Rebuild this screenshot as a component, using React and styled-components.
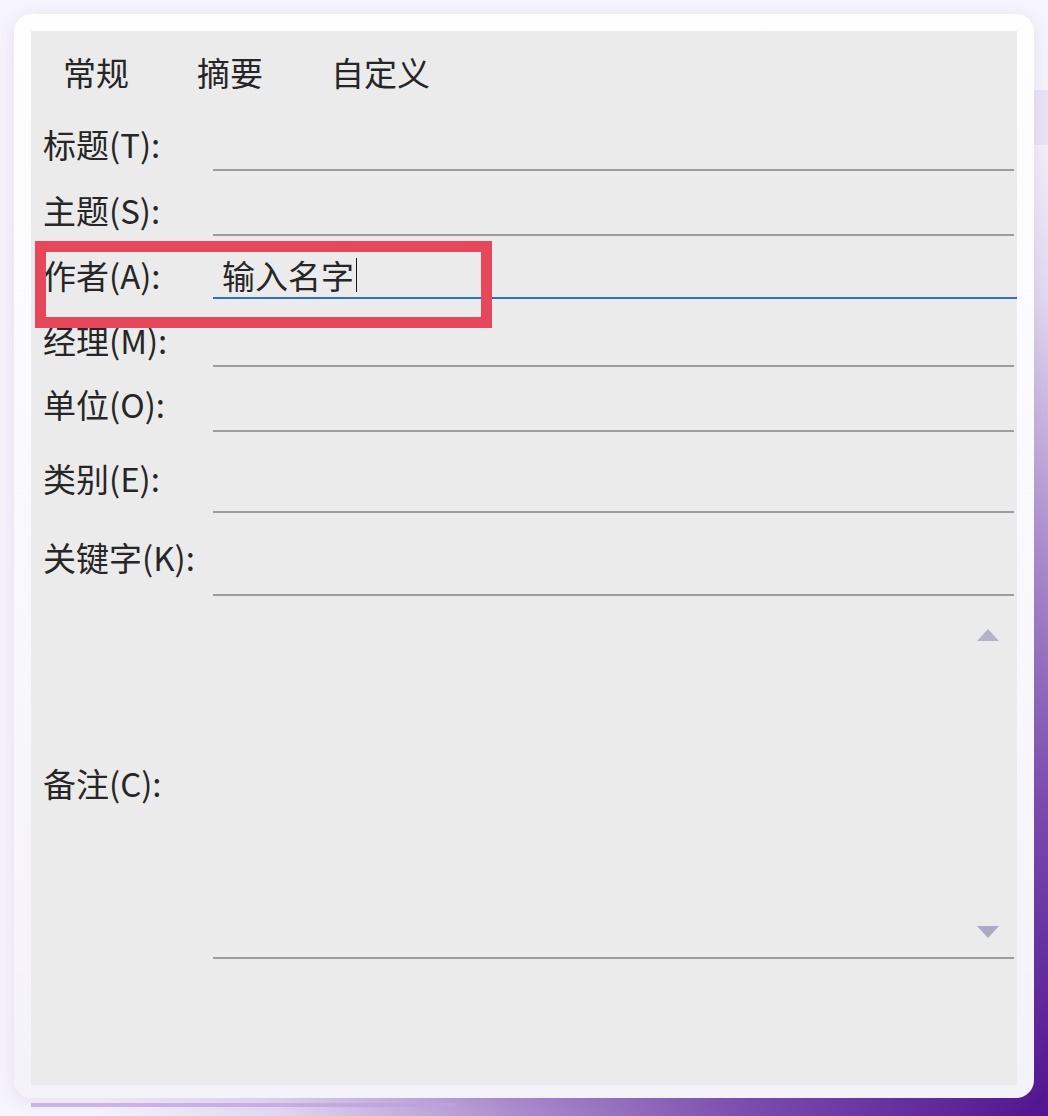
import React from "react";
import styled, { createGlobalStyle } from "styled-components";

const Global = createGlobalStyle`
  html, body {
    margin: 0;
    padding: 0;
  }
  body {
    width: 1048px;
    min-height: 1116px;
    overflow: hidden;
    font-family: "Noto Sans CJK SC", "Noto Sans", sans-serif;
    background:
      linear-gradient(#ebe3f5, #ebe3f5) right 90px / 20px 55px no-repeat,
      radial-gradient(ellipse at 100% 100%, #521490 0%, #7c4cb0 20%, #ad8ecf 36%, #e4d9f1 52%, #f6f4fc 64%, #f6f4fc 100%);
  }
`;

const Page = styled.div`
  width: 1048px;
  height: 1116px;
  padding: 14px 0 0 14px;
  box-sizing: border-box;
`;

const Card = styled.div`
  width: 1020px;
  height: 1084px;
  box-sizing: border-box;
  padding: 17px 17px 13px 17px;
  border-radius: 18px;
  background: linear-gradient(to bottom, #fefefe, #f4f2f9);
  box-shadow: 0 4px 18px rgba(90, 70, 140, 0.12);
`;

const UnderBar = styled.div`
  margin: 5px 0 0 17px;
  width: 424px;
  height: 4px;
  background: rgba(190, 160, 226, 0.75);
`;

const Panel = styled.div`
  position: relative;
  height: 100%;
  box-sizing: border-box;
  background: #ebebeb;
  padding: 0 3px 0 12px;
  color: #262626;
`;

const TabBar = styled.div`
  display: flex;
  align-items: center;
  gap: 68px;
  height: 75px;
  box-sizing: border-box;
  padding: 7px 0 0 20px;
`;

const Tab = styled.div`
  font-size: 33px;
  line-height: 40px;
  white-space: nowrap;
`;

const Row = styled.div`
  display: grid;
  grid-template-columns: 170px 1fr;
  align-items: end;
  height: ${(p) => p.$h}px;
`;

const Label = styled.div`
  font-size: 33px;
  line-height: 40px;
  white-space: nowrap;
  margin-bottom: ${(p) => p.$lift}px;
  align-self: ${(p) => (p.$center ? "center" : "end")};
  margin-top: ${(p) => (p.$center ? 10 : 0)}px;
`;

const Field = styled.div`
  height: 100%;
  box-sizing: border-box;
  display: flex;
  align-items: flex-end;
  border-bottom: 2px solid ${(p) => (p.$active ? "#2e6ec4" : "#9d9d9d")};
  margin-right: ${(p) => (p.$active ? -3 : 0)}px;
  padding: 0 0 2px 9px;
`;

const Value = styled.span`
  font-size: 33px;
  line-height: 40px;
  white-space: nowrap;
  display: inline-flex;
  align-items: center;
`;

const Caret = styled.span`
  display: inline-block;
  width: 1px;
  height: 34px;
  margin-left: 2px;
  background: #1a1a1a;
`;

const NotesField = styled.div`
  height: 100%;
  box-sizing: border-box;
  display: flex;
  justify-content: flex-end;
  border-bottom: 2px solid #9d9d9d;
`;

const ScrollTrack = styled.div`
  display: flex;
  flex-direction: column;
  justify-content: space-between;
  align-items: center;
  width: 24px;
  margin-right: 14px;
  padding: 33px 0 19px;
`;

const Arrow = styled.div`
  width: 0;
  height: 0;
  border-left: 11px solid transparent;
  border-right: 11px solid transparent;
  ${(p) =>
    p.$down
      ? "border-top: 12px solid #aaaac6;"
      : "border-bottom: 12px solid #b2b2c8;"}
`;

const Highlight = styled.div`
  position: absolute;
  left: 4px;
  top: 210px;
  width: 457px;
  height: 87px;
  box-sizing: border-box;
  border: 11px solid #e6475a;
  pointer-events: none;
`;

const rows = [
  { label: "标题(T):", h: 65, lift: 7 },
  { label: "主题(S):", h: 65, lift: 6 },
  { label: "作者(A):", h: 63, lift: 4, value: "输入名字", active: true },
  { label: "经理(M):", h: 68, lift: 7 },
  { label: "单位(O):", h: 65, lift: 8 },
  { label: "类别(E):", h: 81, lift: 15 },
  { label: "关键字(K):", h: 83, lift: 19 },
];

export default function App() {
  return (
    <>
      <Global />
      <Page>
        <Card>
          <Panel>
            <TabBar>
              <Tab>常规</Tab>
              <Tab>摘要</Tab>
              <Tab>自定义</Tab>
            </TabBar>
            {rows.map((r) => (
              <Row key={r.label} $h={r.h}>
                <Label $lift={r.lift}>{r.label}</Label>
                <Field $active={r.active}>
                  {r.value && (
                    <Value>
                      {r.value}
                      <Caret />
                    </Value>
                  )}
                </Field>
              </Row>
            ))}
            <Row $h={363}>
              <Label $center $lift={0}>备注(C):</Label>
              <NotesField>
                <ScrollTrack>
                  <Arrow />
                  <Arrow $down />
                </ScrollTrack>
              </NotesField>
            </Row>
            <Highlight />
          </Panel>
        </Card>
        <UnderBar />
      </Page>
    </>
  );
}
